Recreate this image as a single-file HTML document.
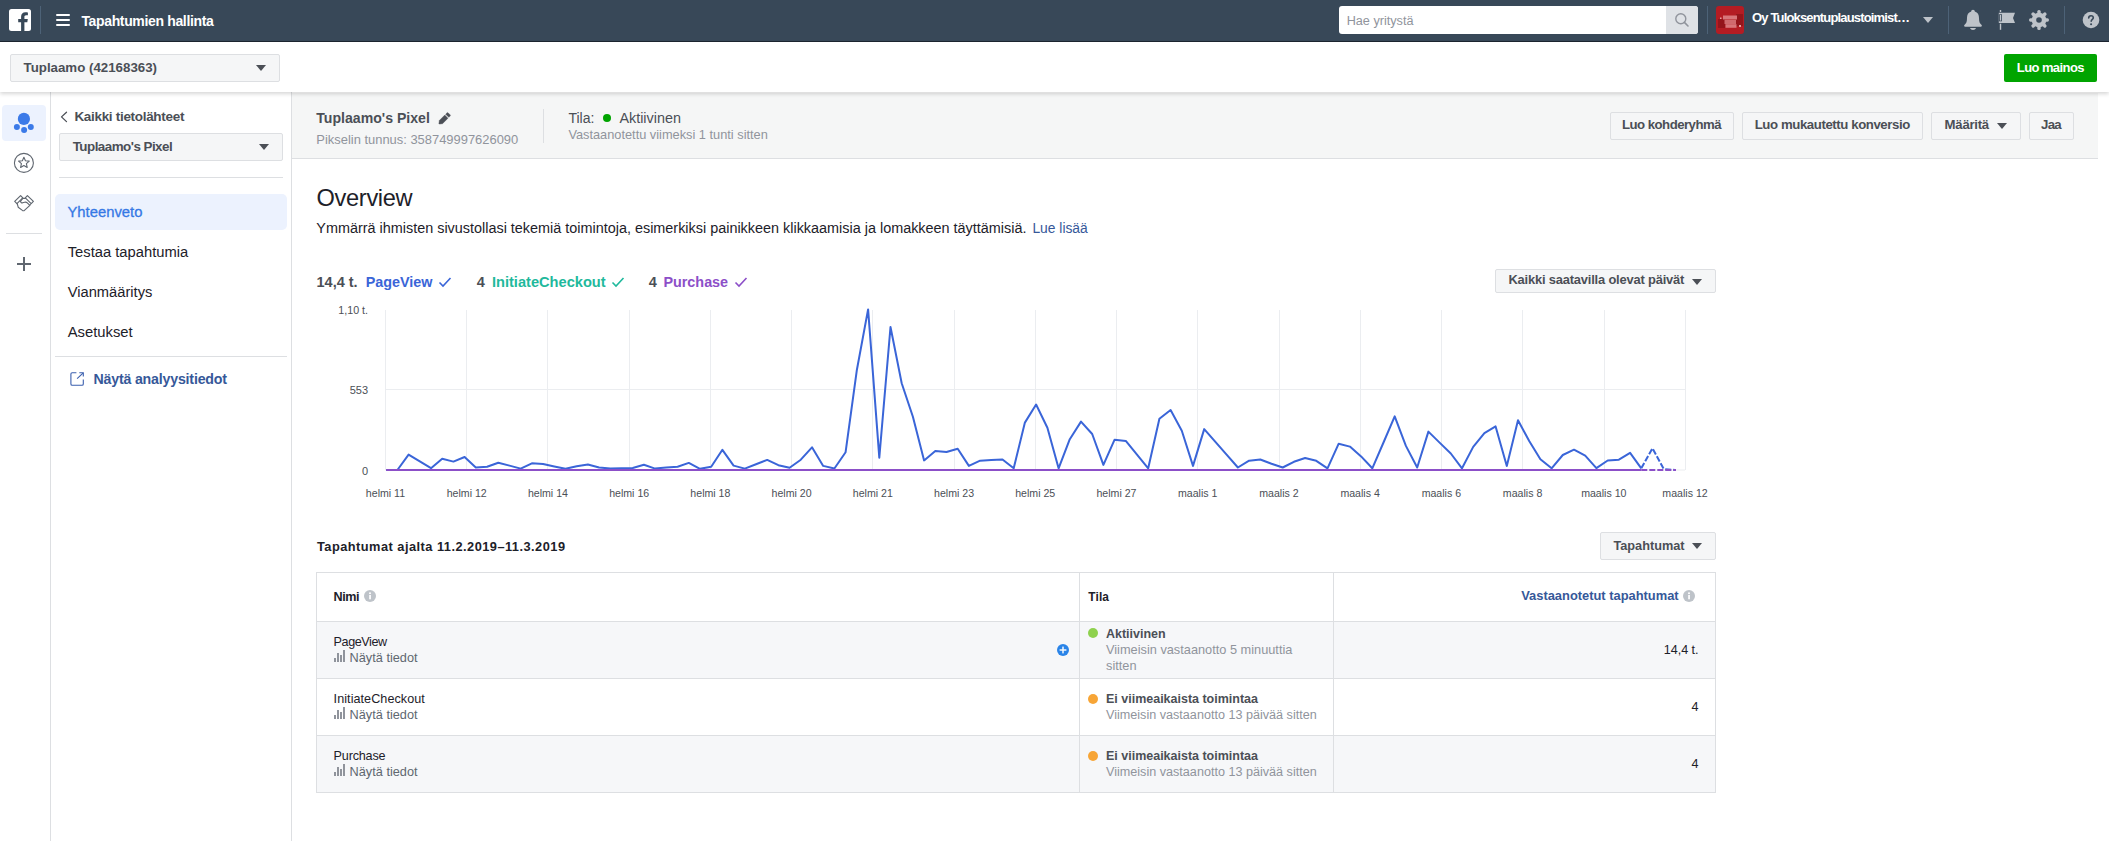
<!DOCTYPE html>
<html><head><meta charset="utf-8"><title>Tapahtumien hallinta</title>
<style>
html,body{margin:0;padding:0}
body{width:2109px;height:841px;overflow:hidden;position:relative;background:#fff;font-family:"Liberation Sans", sans-serif}
.t{position:absolute;white-space:nowrap;font-family:"Liberation Sans", sans-serif}
svg{display:block}
</style></head><body>
<div style="position:absolute;left:0px;top:0px;width:2109px;height:41px;background:#384858"></div>
<div style="position:absolute;left:0px;top:41px;width:2109px;height:1px;background:#1c2530"></div>
<svg style="position:absolute;left:9px;top:9px" width="22" height="22" viewBox="0 0 22 22">
<rect x="0" y="0" width="22" height="22" rx="2.5" fill="#fff"/>
<path d="M12.1 22V13.2H9.2V10.1H12.1V7.7C12.1 4.9 13.8 3.3 16.4 3.3C17.5 3.3 18.6 3.5 18.9 3.5V6.3H17.2C15.8 6.3 15.4 7.1 15.4 8V10.1H18.8L18.3 13.2H15.4V22Z" fill="#384858"/>
</svg>
<div style="position:absolute;left:40px;top:6px;width:1px;height:28px;background:#4d6277"></div>
<div style="position:absolute;left:56px;top:14px;width:14px;height:2px;background:#fff;border-radius:1px"></div>
<div style="position:absolute;left:56px;top:19px;width:14px;height:2px;background:#fff;border-radius:1px"></div>
<div style="position:absolute;left:56px;top:24px;width:14px;height:2px;background:#fff;border-radius:1px"></div>
<div class="t" style="left:81.40px;top:12.05px;font-size:14px;line-height:18px;color:#fff;font-weight:700;letter-spacing:-0.347px;">Tapahtumien hallinta</div>
<div style="position:absolute;left:1339px;top:6px;width:359px;height:28px;background:#fff;border-radius:3px"></div>
<div style="position:absolute;left:1666px;top:6px;width:32px;height:28px;background:#dfe2e6;border-radius:0 3px 3px 0"></div>
<svg style="position:absolute;left:1674px;top:12px" width="16" height="16" viewBox="0 0 16 16">
<circle cx="6.8" cy="6.8" r="5" fill="none" stroke="#90949c" stroke-width="1.4"/>
<path d="M10.4 10.4L14 14" stroke="#90949c" stroke-width="1.6" stroke-linecap="round"/></svg>
<div class="t" style="left:1346.70px;top:12.62px;font-size:12.65px;line-height:16px;color:#90949c;font-weight:400;">Hae yritystä</div>
<div style="position:absolute;left:1707px;top:6px;width:1px;height:28px;background:#4d6277"></div>
<svg style="position:absolute;left:1716px;top:6px" width="28" height="28" viewBox="0 0 28 28">
<rect width="28" height="28" rx="3" fill="#b41c23"/>
<rect x="2" y="13" width="7" height="9" fill="#8c1419" opacity="0.8"/>
<rect x="20" y="8" width="7" height="12" fill="#8c1419" opacity="0.8"/>
<rect x="7" y="9.5" width="14" height="4" fill="#d8767a"/>
<rect x="8.5" y="14" width="11.5" height="4" fill="#d06a6e"/>
<rect x="9.5" y="18.2" width="11" height="3.6" fill="#d8767a"/>
<rect x="4" y="11.5" width="1.5" height="1.5" fill="#e8a0a0"/>
<rect x="23" y="19" width="2" height="2" fill="#e8a0a0"/>
</svg>
<div class="t" style="left:1752.00px;top:10.30px;font-size:13px;line-height:16px;color:#fff;font-weight:700;letter-spacing:-0.836px;">Oy Tuloksentuplaustoimist…</div>
<svg style="position:absolute;left:1923px;top:17px" width="10" height="6" viewBox="0 0 10 6"><path d="M0 0H10L5.0 6Z" fill="#bec3c9"/></svg>
<div style="position:absolute;left:1948px;top:6px;width:1px;height:28px;background:#4d6277"></div>
<svg style="position:absolute;left:1963px;top:9px" width="20" height="22" viewBox="0 0 20 22">
<path d="M10 0.8C11.1 0.8 11.8 1.6 11.8 2.4C14.8 3.2 16 5.6 16 9C16 12.6 16.6 14.2 18.4 15.8C19.2 16.5 19 17.7 17.8 17.7H2.2C1 17.7 0.8 16.5 1.6 15.8C3.4 14.2 4 12.6 4 9C4 5.6 5.2 3.2 8.2 2.4C8.2 1.6 8.9 0.8 10 0.8Z" fill="#bec3c9"/>
<path d="M7 19H13C12.6 20.3 11.4 21 10 21C8.6 21 7.4 20.3 7 19Z" fill="#bec3c9"/></svg>
<svg style="position:absolute;left:1998px;top:10px" width="18" height="20" viewBox="0 0 18 20">
<rect x="1.8" y="0" width="1.4" height="2" fill="#bec3c9"/>
<path d="M0.8 2.8H17L15 8L17 13H0.8Z" fill="#bec3c9"/>
<rect x="1" y="4.3" width="3" height="7" fill="#384858"/>
<rect x="1.8" y="5" width="1.4" height="5.6" fill="#bec3c9"/>
<rect x="1.8" y="13.7" width="1.4" height="6.1" fill="#bec3c9"/>
</svg>
<svg style="position:absolute;left:2029px;top:10px" width="20" height="20" viewBox="0 0 20 20">
<g fill="#bec3c9"><circle cx="10" cy="10" r="7.3"/><rect x="8.3" y="0" width="3.4" height="6" rx="1.6" transform="rotate(0 10 10)"/><rect x="8.3" y="0" width="3.4" height="6" rx="1.6" transform="rotate(45 10 10)"/><rect x="8.3" y="0" width="3.4" height="6" rx="1.6" transform="rotate(90 10 10)"/><rect x="8.3" y="0" width="3.4" height="6" rx="1.6" transform="rotate(135 10 10)"/><rect x="8.3" y="0" width="3.4" height="6" rx="1.6" transform="rotate(180 10 10)"/><rect x="8.3" y="0" width="3.4" height="6" rx="1.6" transform="rotate(225 10 10)"/><rect x="8.3" y="0" width="3.4" height="6" rx="1.6" transform="rotate(270 10 10)"/><rect x="8.3" y="0" width="3.4" height="6" rx="1.6" transform="rotate(315 10 10)"/></g>
<circle cx="10" cy="10" r="2.8" fill="#384858"/></svg>
<div style="position:absolute;left:2064px;top:6px;width:1px;height:28px;background:#4d6277"></div>
<svg style="position:absolute;left:2082px;top:11px" width="18" height="18" viewBox="0 0 18 18">
<circle cx="9" cy="9" r="8.3" fill="#bec3c9"/>
<path d="M6.7 7.0C6.7 5.6 7.7 4.7 9.0 4.7C10.3 4.7 11.3 5.6 11.3 6.8C11.3 8.4 9.2 8.5 9.2 10.3" fill="none" stroke="#384858" stroke-width="1.6" stroke-linecap="round"/>
<circle cx="9.1" cy="13.2" r="1.05" fill="#384858"/></svg>
<div style="position:absolute;left:0px;top:42px;width:2109px;height:50px;background:#fff;box-shadow:0 2px 4px rgba(0,0,0,0.16);z-index:2"></div>
<div style="position:absolute;left:10px;top:54px;width:270px;height:28px;background:#f5f6f7;border:1px solid #dddfe2;border-radius:2px;box-sizing:border-box;z-index:3"></div>
<div class="t" style="left:23.50px;top:58.89px;font-size:13.3px;line-height:17px;color:#4b4f56;font-weight:700;z-index:3">Tuplaamo (42168363)</div>
<div style="position:absolute;z-index:3;left:0;top:0">
<svg style="position:absolute;left:256px;top:65px" width="10" height="6" viewBox="0 0 10 6"><path d="M0 0H10L5.0 6Z" fill="#4b4f56"/></svg>
</div>
<div style="position:absolute;left:2004px;top:54px;width:93px;height:28px;background:#00a400;border-radius:2px;z-index:3"></div>
<div class="t" style="left:2016.80px;top:59.50px;font-size:13px;line-height:16px;color:#fff;font-weight:700;letter-spacing:-0.584px;z-index:3">Luo mainos</div>
<div style="position:absolute;left:50px;top:92px;width:1px;height:749px;background:#dddfe2"></div>
<div style="position:absolute;left:2px;top:105px;width:44px;height:36px;background:#ecf2fe;border-radius:4px"></div>
<svg style="position:absolute;left:12px;top:111px" width="24" height="24" viewBox="0 0 24 24">
<circle cx="11.9" cy="7.9" r="6.1" fill="#3b7ae8"/>
<circle cx="4.9" cy="15.9" r="3.0" fill="#3b7ae8"/>
<circle cx="12.1" cy="19" r="3.0" fill="#3b7ae8"/>
<circle cx="18.8" cy="15.9" r="3.0" fill="#3b7ae8"/></svg>
<svg style="position:absolute;left:12px;top:151px" width="24" height="24" viewBox="0 0 24 24">
<circle cx="11.9" cy="11.9" r="9.5" fill="none" stroke="#606770" stroke-width="1.1"/>
<path d="M11.90 6.30 L13.43 9.80 L17.23 10.17 L14.37 12.70 L15.19 16.43 L11.90 14.50 L8.61 16.43 L9.43 12.70 L6.57 10.17 L10.37 9.80Z" fill="none" stroke="#606770" stroke-width="1.1" stroke-linejoin="round"/></svg>
<svg style="position:absolute;left:10px;top:190px" width="28" height="24" viewBox="0 0 28 24">
<g fill="none" stroke="#606770" stroke-width="1.15" stroke-linejoin="round" stroke-linecap="round">
<path d="M10.6 5.6L12.8 7.9L6.9 13.6L4.7 11.4Z"/>
<path d="M17.4 5.6L23.4 11.4L21.2 13.6L15.3 7.9Z"/>
<path d="M12.8 8.4H15.3"/>
<path d="M12.6 8.6L10.4 11.3C10.9 12.6 11.8 13.2 12.6 12.8L14.6 12.2C15.6 11.9 16.6 12.2 17.3 12.9L19.6 15.2"/>
<path d="M7.2 13.6L8.2 17.2L12.4 20.4C13 20.8 13.8 20.8 14.4 20.4L19.6 15.6L20.4 14.2"/>
</g></svg>
<div style="position:absolute;left:6px;top:233px;width:36px;height:1px;background:#dddfe2"></div>
<div style="position:absolute;left:17px;top:263px;width:14px;height:2px;background:#606770"></div>
<div style="position:absolute;left:23px;top:257px;width:2px;height:14px;background:#606770"></div>
<div style="position:absolute;left:291px;top:92px;width:1px;height:749px;background:#dddfe2"></div>
<svg style="position:absolute;left:59px;top:110px" width="10" height="14" viewBox="0 0 10 14">
<path d="M7.5 2.2L2.5 6.9L7.5 11.6" fill="none" stroke="#4b4f56" stroke-width="1.3" stroke-linecap="round" stroke-linejoin="round"/></svg>
<div class="t" style="left:74.40px;top:108.22px;font-size:13.5px;line-height:17px;color:#4b4f56;font-weight:700;letter-spacing:-0.308px;">Kaikki tietolähteet</div>
<div style="position:absolute;left:59px;top:133px;width:224px;height:28px;background:#f5f6f7;border:1px solid #dddfe2;border-radius:2px;box-sizing:border-box"></div>
<div class="t" style="left:72.70px;top:138.06px;font-size:13.4px;line-height:17px;color:#4b4f56;font-weight:700;letter-spacing:-0.525px;">Tuplaamo's Pixel</div>
<svg style="position:absolute;left:259px;top:144px" width="10" height="6" viewBox="0 0 10 6"><path d="M0 0H10L5.0 6Z" fill="#4b4f56"/></svg>
<div style="position:absolute;left:59px;top:177px;width:224px;height:1px;background:#dddfe2"></div>
<div style="position:absolute;left:55px;top:194px;width:232px;height:36px;background:#ecf2fe;border-radius:5px"></div>
<div class="t" style="left:67.50px;top:203.07px;font-size:14.8px;line-height:18px;color:#3578e5;font-weight:400;-webkit-text-stroke:0.3px #3578e5">Yhteenveto</div>
<div class="t" style="left:67.70px;top:242.89px;font-size:14.75px;line-height:18px;color:#1d2129;font-weight:400;">Testaa tapahtumia</div>
<div class="t" style="left:67.70px;top:283.31px;font-size:14.7px;line-height:18px;color:#1d2129;font-weight:400;">Vianmääritys</div>
<div class="t" style="left:67.70px;top:322.87px;font-size:14.8px;line-height:18px;color:#1d2129;font-weight:400;">Asetukset</div>
<div style="position:absolute;left:55px;top:356px;width:232px;height:1px;background:#dddfe2"></div>
<svg style="position:absolute;left:68px;top:370px" width="18" height="18" viewBox="0 0 18 18">
<g fill="none" stroke="#3b5fae" stroke-width="1.1" stroke-linecap="butt">
<path d="M8.4 2.8H4.2C3.4 2.8 2.9 3.3 2.9 4.1V14C2.9 14.8 3.4 15.3 4.2 15.3H14C14.8 15.3 15.3 14.8 15.3 14V9.5"/>
<path d="M11.3 2.8H15.3V6.6"/><path d="M15 3.1L9.1 8.6"/></g></svg>
<div class="t" style="left:93.50px;top:370.08px;font-size:14.2px;line-height:18px;color:#365899;font-weight:700;letter-spacing:-0.195px;">Näytä analyysitiedot</div>
<div style="position:absolute;left:292px;top:93px;width:1806px;height:65px;background:#f5f6f6"></div>
<div style="position:absolute;left:292px;top:158px;width:1806px;height:1px;background:#dddfe2"></div>
<div class="t" style="left:316.30px;top:108.81px;font-size:14.1px;line-height:18px;color:#4b4f56;font-weight:700;">Tuplaamo's Pixel</div>
<svg style="position:absolute;left:436px;top:108px" width="18" height="18" viewBox="0 0 18 18">
<path d="M3.31 16.11 L2.89 15.69 L3.35 12.47 L8.79 7.03 L11.97 10.21 L6.53 15.65Z" fill="#4b4f56" stroke="#4b4f56" stroke-width="0.4" stroke-linejoin="round"/>
<path d="M9.64 6.18 L11.13 4.69 L11.97 4.69 L14.31 7.03 L14.31 7.87 L12.82 9.36Z" fill="#4b4f56" stroke="#4b4f56" stroke-width="0.4" stroke-linejoin="round"/></svg>
<div class="t" style="left:316.30px;top:131.52px;font-size:12.93px;line-height:16px;color:#90949c;font-weight:400;">Pikselin tunnus: 358749997626090</div>
<div style="position:absolute;left:543px;top:109px;width:1px;height:34px;background:#dddfe2"></div>
<div class="t" style="left:568.40px;top:108.84px;font-size:14.04px;line-height:18px;color:#4b4f56;font-weight:400;">Tila:</div>
<div style="position:absolute;left:603px;top:114px;width:8.4px;height:8.4px;border-radius:50%;background:#00a400"></div>
<div class="t" style="left:619.40px;top:108.71px;font-size:14.39px;line-height:18px;color:#4b4f56;font-weight:400;">Aktiivinen</div>
<div class="t" style="left:568.40px;top:127.27px;font-size:12.79px;line-height:16px;color:#90949c;font-weight:400;">Vastaanotettu viimeksi 1 tunti sitten</div>
<div style="position:absolute;left:1610px;top:112px;width:124px;height:28px;background:#f5f6f7;border:1px solid #dddfe2;border-radius:2px;box-sizing:border-box"></div>
<div class="t" style="left:1622.00px;top:117.33px;font-size:13.2px;line-height:16px;color:#4b4f56;font-weight:700;letter-spacing:-0.519px;">Luo kohderyhmä</div>
<div style="position:absolute;left:1742px;top:112px;width:181px;height:28px;background:#f5f6f7;border:1px solid #dddfe2;border-radius:2px;box-sizing:border-box"></div>
<div class="t" style="left:1754.70px;top:117.33px;font-size:13.2px;line-height:16px;color:#4b4f56;font-weight:700;letter-spacing:-0.403px;">Luo mukautettu konversio</div>
<div style="position:absolute;left:1931px;top:112px;width:90px;height:28px;background:#f5f6f7;border:1px solid #dddfe2;border-radius:2px;box-sizing:border-box"></div>
<div class="t" style="left:1944.60px;top:117.33px;font-size:13.2px;line-height:16px;color:#4b4f56;font-weight:700;letter-spacing:-0.265px;">Määritä</div>
<svg style="position:absolute;left:1997px;top:123px" width="10" height="6" viewBox="0 0 10 6"><path d="M0 0H10L5.0 6Z" fill="#4b4f56"/></svg>
<div style="position:absolute;left:2029px;top:112px;width:45px;height:28px;background:#f5f6f7;border:1px solid #dddfe2;border-radius:2px;box-sizing:border-box"></div>
<div class="t" style="left:2041.00px;top:117.33px;font-size:13.2px;line-height:16px;color:#4b4f56;font-weight:700;letter-spacing:-0.658px;">Jaa</div>
<div class="t" style="left:316.60px;top:182.62px;font-size:23.6px;line-height:30px;color:#1d2129;font-weight:400;letter-spacing:-0.333px;">Overview</div>
<div class="t" style="left:316.30px;top:218.80px;font-size:14.42px;line-height:18px;color:#1d2129;font-weight:400;">Ymmärrä ihmisten sivustollasi tekemiä toimintoja, esimerkiksi painikkeen klikkaamisia ja lomakkeen täyttämisiä.</div>
<div class="t" style="left:1032.40px;top:219.50px;font-size:13.84px;line-height:17px;color:#365899;font-weight:400;">Lue lisää</div>
<div class="t" style="left:316.50px;top:272.98px;font-size:14.5px;line-height:18px;color:#4b4f56;font-weight:700;">14,4 t.</div>
<div class="t" style="left:365.70px;top:273.02px;font-size:14.36px;line-height:18px;color:#3a65d8;font-weight:700;">PageView</div>
<svg style="position:absolute;left:438px;top:276px" width="14" height="12" viewBox="0 0 14 12"><path d="M1.5 6.5L5 10L12.5 2" fill="none" stroke="#3a65d8" stroke-width="1.6"/></svg>
<div class="t" style="left:476.70px;top:272.98px;font-size:14.5px;line-height:18px;color:#4b4f56;font-weight:700;">4</div>
<div class="t" style="left:491.90px;top:272.93px;font-size:14.64px;line-height:18px;color:#1fb99c;font-weight:700;">InitiateCheckout</div>
<svg style="position:absolute;left:611px;top:276px" width="14" height="12" viewBox="0 0 14 12"><path d="M1.5 6.5L5 10L12.5 2" fill="none" stroke="#1fb99c" stroke-width="1.6"/></svg>
<div class="t" style="left:648.80px;top:272.98px;font-size:14.5px;line-height:18px;color:#4b4f56;font-weight:700;">4</div>
<div class="t" style="left:663.40px;top:273.01px;font-size:14.39px;line-height:18px;color:#8c4fc8;font-weight:700;">Purchase</div>
<svg style="position:absolute;left:733.5px;top:276px" width="14" height="12" viewBox="0 0 14 12"><path d="M1.5 6.5L5 10L12.5 2" fill="none" stroke="#8c4fc8" stroke-width="1.6"/></svg>
<div style="position:absolute;left:1495px;top:269px;width:221px;height:24px;background:#f5f6f7;border:1px solid #dddfe2;border-radius:2px;box-sizing:border-box"></div>
<div class="t" style="left:1508.40px;top:272.43px;font-size:12.9px;line-height:16px;color:#4b4f56;font-weight:700;letter-spacing:-0.177px;">Kaikki saatavilla olevat päivät</div>
<svg style="position:absolute;left:1692px;top:278.5px" width="10" height="6" viewBox="0 0 10 6"><path d="M0 0H10L5.0 6Z" fill="#4b4f56"/></svg>
<svg style="position:absolute;left:0;top:0" width="2109" height="841" viewBox="0 0 2109 841">
<line x1="385.50" y1="310" x2="385.50" y2="470" stroke="#ebedf0" stroke-width="1"/>
<line x1="466.50" y1="310" x2="466.50" y2="470" stroke="#ebedf0" stroke-width="1"/>
<line x1="547.50" y1="310" x2="547.50" y2="470" stroke="#ebedf0" stroke-width="1"/>
<line x1="629.50" y1="310" x2="629.50" y2="470" stroke="#ebedf0" stroke-width="1"/>
<line x1="710.50" y1="310" x2="710.50" y2="470" stroke="#ebedf0" stroke-width="1"/>
<line x1="791.50" y1="310" x2="791.50" y2="470" stroke="#ebedf0" stroke-width="1"/>
<line x1="872.50" y1="310" x2="872.50" y2="470" stroke="#ebedf0" stroke-width="1"/>
<line x1="954.50" y1="310" x2="954.50" y2="470" stroke="#ebedf0" stroke-width="1"/>
<line x1="1035.50" y1="310" x2="1035.50" y2="470" stroke="#ebedf0" stroke-width="1"/>
<line x1="1116.50" y1="310" x2="1116.50" y2="470" stroke="#ebedf0" stroke-width="1"/>
<line x1="1197.50" y1="310" x2="1197.50" y2="470" stroke="#ebedf0" stroke-width="1"/>
<line x1="1279.50" y1="310" x2="1279.50" y2="470" stroke="#ebedf0" stroke-width="1"/>
<line x1="1360.50" y1="310" x2="1360.50" y2="470" stroke="#ebedf0" stroke-width="1"/>
<line x1="1441.50" y1="310" x2="1441.50" y2="470" stroke="#ebedf0" stroke-width="1"/>
<line x1="1522.50" y1="310" x2="1522.50" y2="470" stroke="#ebedf0" stroke-width="1"/>
<line x1="1604.50" y1="310" x2="1604.50" y2="470" stroke="#ebedf0" stroke-width="1"/>
<line x1="1685.50" y1="310" x2="1685.50" y2="470" stroke="#ebedf0" stroke-width="1"/>
<line x1="385.5" y1="389.5" x2="1685" y2="389.5" stroke="#ebedf0" stroke-width="1"/>
<line x1="385.5" y1="470" x2="1685" y2="470" stroke="#ebedf0" stroke-width="1"/>
<polyline points="386.2,470.0 397.4,470.0 408.6,454.6 419.8,461.4 431.0,468.2 442.2,458.8 453.4,461.6 464.6,457.0 475.8,467.4 487.1,466.8 498.3,462.7 509.5,465.6 520.7,468.6 531.9,463.3 543.1,464.0 554.3,466.5 565.5,468.8 576.7,466.3 587.9,464.5 599.1,467.5 610.3,468.5 621.5,468.3 632.7,468.0 643.9,464.8 655.1,468.6 666.3,467.6 677.6,466.8 688.8,462.9 700.0,468.8 711.2,466.8 722.4,449.8 733.6,465.6 744.8,468.6 756.0,464.2 767.2,459.9 778.4,465.2 789.6,467.8 800.8,459.7 812.0,447.3 823.2,465.9 834.4,468.5 845.6,452.2 856.9,369.7 868.1,309.4 879.3,457.7 890.5,327.0 901.7,383.3 912.9,416.7 924.1,460.4 935.3,451.0 946.5,452.0 957.7,448.7 968.9,465.9 980.1,460.7 991.3,460.0 1002.5,459.5 1013.7,468.3 1024.9,422.6 1036.1,404.5 1047.4,427.8 1058.6,468.3 1069.8,439.2 1081.0,421.6 1092.2,434.0 1103.4,464.9 1114.6,439.7 1125.8,440.9 1137.0,454.6 1148.2,468.3 1159.4,418.8 1170.6,410.0 1181.8,430.7 1193.0,465.9 1204.2,429.1 1215.4,441.9 1226.6,454.7 1237.9,467.5 1249.1,460.7 1260.3,459.5 1271.5,463.7 1282.7,467.5 1293.9,461.8 1305.1,458.0 1316.3,460.8 1327.5,468.3 1338.7,443.7 1349.9,446.6 1361.1,456.4 1372.3,468.3 1383.5,442.5 1394.7,416.4 1405.9,445.9 1417.2,467.5 1428.4,431.6 1439.6,442.6 1450.8,453.5 1462.0,468.3 1473.2,446.9 1484.4,433.1 1495.6,426.4 1506.8,465.9 1518.0,420.2 1529.2,441.0 1540.4,459.2 1551.6,468.3 1562.8,455.0 1574.0,449.7 1585.2,455.7 1596.4,468.1 1607.7,460.5 1618.9,459.7 1630.1,452.8 1641.3,468.3" fill="none" stroke="#3a65d8" stroke-width="2" stroke-linejoin="round"/>
<polyline points="1641.3,468.3 1652.5,448.3 1663.7,469.0 1674.9,470.0" fill="none" stroke="#3a65d8" stroke-width="2" stroke-dasharray="6 2"/>
<line x1="386.2" y1="470" x2="1641.3" y2="470" stroke="#8c4fc8" stroke-width="2"/>
<line x1="1641.3" y1="470" x2="1676" y2="470" stroke="#8c4fc8" stroke-width="2" stroke-dasharray="6 2"/>
</svg>
<div class="t" style="right:1741.00px;top:304.29px;font-size:10.7px;line-height:13px;color:#4b4f56;font-weight:400;">1,10 t.</div>
<div class="t" style="right:1741.00px;top:383.19px;font-size:11px;line-height:14px;color:#4b4f56;font-weight:400;">553</div>
<div class="t" style="right:1741.00px;top:463.69px;font-size:11px;line-height:14px;color:#4b4f56;font-weight:400;">0</div>
<div class="t" style="left:325.50px;width:120px;text-align:center;top:486.33px;font-size:10.6px;line-height:14px;color:#4b4f56">helmi 11</div>
<div class="t" style="left:406.72px;width:120px;text-align:center;top:486.33px;font-size:10.6px;line-height:14px;color:#4b4f56">helmi 12</div>
<div class="t" style="left:487.94px;width:120px;text-align:center;top:486.33px;font-size:10.6px;line-height:14px;color:#4b4f56">helmi 14</div>
<div class="t" style="left:569.16px;width:120px;text-align:center;top:486.33px;font-size:10.6px;line-height:14px;color:#4b4f56">helmi 16</div>
<div class="t" style="left:650.38px;width:120px;text-align:center;top:486.33px;font-size:10.6px;line-height:14px;color:#4b4f56">helmi 18</div>
<div class="t" style="left:731.60px;width:120px;text-align:center;top:486.33px;font-size:10.6px;line-height:14px;color:#4b4f56">helmi 20</div>
<div class="t" style="left:812.82px;width:120px;text-align:center;top:486.33px;font-size:10.6px;line-height:14px;color:#4b4f56">helmi 21</div>
<div class="t" style="left:894.04px;width:120px;text-align:center;top:486.33px;font-size:10.6px;line-height:14px;color:#4b4f56">helmi 23</div>
<div class="t" style="left:975.26px;width:120px;text-align:center;top:486.33px;font-size:10.6px;line-height:14px;color:#4b4f56">helmi 25</div>
<div class="t" style="left:1056.48px;width:120px;text-align:center;top:486.33px;font-size:10.6px;line-height:14px;color:#4b4f56">helmi 27</div>
<div class="t" style="left:1137.70px;width:120px;text-align:center;top:486.33px;font-size:10.6px;line-height:14px;color:#4b4f56">maalis 1</div>
<div class="t" style="left:1218.92px;width:120px;text-align:center;top:486.33px;font-size:10.6px;line-height:14px;color:#4b4f56">maalis 2</div>
<div class="t" style="left:1300.14px;width:120px;text-align:center;top:486.33px;font-size:10.6px;line-height:14px;color:#4b4f56">maalis 4</div>
<div class="t" style="left:1381.36px;width:120px;text-align:center;top:486.33px;font-size:10.6px;line-height:14px;color:#4b4f56">maalis 6</div>
<div class="t" style="left:1462.58px;width:120px;text-align:center;top:486.33px;font-size:10.6px;line-height:14px;color:#4b4f56">maalis 8</div>
<div class="t" style="left:1543.80px;width:120px;text-align:center;top:486.33px;font-size:10.6px;line-height:14px;color:#4b4f56">maalis 10</div>
<div class="t" style="left:1625.02px;width:120px;text-align:center;top:486.33px;font-size:10.6px;line-height:14px;color:#4b4f56">maalis 12</div>
<div class="t" style="left:317.00px;top:538.56px;font-size:12.8px;line-height:16px;color:#1d2129;font-weight:700;letter-spacing:0.473px;">Tapahtumat ajalta 11.2.2019–11.3.2019</div>
<div style="position:absolute;left:1600px;top:532px;width:116px;height:28px;background:#f5f6f7;border:1px solid #dddfe2;border-radius:2px;box-sizing:border-box"></div>
<div class="t" style="left:1613.40px;top:537.59px;font-size:12.73px;line-height:16px;color:#4b4f56;font-weight:700;">Tapahtumat</div>
<svg style="position:absolute;left:1692px;top:543px" width="10" height="6" viewBox="0 0 10 6"><path d="M0 0H10L5.0 6Z" fill="#4b4f56"/></svg>
<div style="position:absolute;left:316px;top:572px;width:1400px;height:221px;border:1px solid #dddfe2;box-sizing:border-box;background:#fff"></div>
<div style="position:absolute;left:317px;top:622px;width:1398px;height:56px;background:#f6f7f9"></div>
<div style="position:absolute;left:317px;top:736px;width:1398px;height:56px;background:#f6f7f9"></div>
<div style="position:absolute;left:317px;top:621px;width:1398px;height:1px;background:#dddfe2"></div>
<div style="position:absolute;left:317px;top:678px;width:1398px;height:1px;background:#dddfe2"></div>
<div style="position:absolute;left:317px;top:735px;width:1398px;height:1px;background:#dddfe2"></div>
<div style="position:absolute;left:1079px;top:573px;width:1px;height:219px;background:#dddfe2"></div>
<div style="position:absolute;left:1333px;top:573px;width:1px;height:219px;background:#dddfe2"></div>
<div class="t" style="left:333.60px;top:588.63px;font-size:12.6px;line-height:16px;color:#1d2129;font-weight:700;letter-spacing:-0.432px;">Nimi</div>
<svg style="position:absolute;left:364px;top:590.4px" width="12" height="12" viewBox="0 0 12 12"><circle cx="6" cy="6" r="6" fill="#bec3c9"/><rect x="5.2" y="5" width="1.7" height="4.3" fill="#fff"/><circle cx="6" cy="3.3" r="1" fill="#fff"/></svg>
<div class="t" style="left:1088.30px;top:590.08px;font-size:11.9px;line-height:15px;color:#1d2129;font-weight:700;letter-spacing:0.140px;">Tila</div>
<div class="t" style="right:430.40px;top:588.23px;font-size:12.89px;line-height:16px;color:#365899;font-weight:700;">Vastaanotetut tapahtumat</div>
<svg style="position:absolute;left:1683.3px;top:590.1px" width="12" height="12" viewBox="0 0 12 12"><circle cx="6" cy="6" r="6" fill="#bec3c9"/><rect x="5.2" y="5" width="1.7" height="4.3" fill="#fff"/><circle cx="6" cy="3.3" r="1" fill="#fff"/></svg>
<div class="t" style="left:333.60px;top:633.63px;font-size:12.6px;line-height:16px;color:#1d2129;font-weight:400;letter-spacing:-0.426px;">PageView</div>
<svg style="position:absolute;left:334px;top:650px" width="12" height="12" viewBox="0 0 12 12"><rect x="0" y="8" width="2" height="4" fill="#90949c"/><rect x="3" y="3" width="2" height="9" fill="#90949c"/><rect x="6" y="5" width="2" height="7" fill="#90949c"/><rect x="9" y="0" width="2" height="12" fill="#90949c"/></svg>
<div class="t" style="left:349.60px;top:650.19px;font-size:12.74px;line-height:16px;color:#606770;font-weight:400;">Näytä tiedot</div>
<div class="t" style="left:333.60px;top:690.63px;font-size:12.6px;line-height:16px;color:#1d2129;font-weight:400;letter-spacing:0.059px;">InitiateCheckout</div>
<svg style="position:absolute;left:334px;top:707px" width="12" height="12" viewBox="0 0 12 12"><rect x="0" y="8" width="2" height="4" fill="#90949c"/><rect x="3" y="3" width="2" height="9" fill="#90949c"/><rect x="6" y="5" width="2" height="7" fill="#90949c"/><rect x="9" y="0" width="2" height="12" fill="#90949c"/></svg>
<div class="t" style="left:349.60px;top:707.19px;font-size:12.74px;line-height:16px;color:#606770;font-weight:400;">Näytä tiedot</div>
<div class="t" style="left:333.60px;top:747.63px;font-size:12.6px;line-height:16px;color:#1d2129;font-weight:400;letter-spacing:-0.174px;">Purchase</div>
<svg style="position:absolute;left:334px;top:764px" width="12" height="12" viewBox="0 0 12 12"><rect x="0" y="8" width="2" height="4" fill="#90949c"/><rect x="3" y="3" width="2" height="9" fill="#90949c"/><rect x="6" y="5" width="2" height="7" fill="#90949c"/><rect x="9" y="0" width="2" height="12" fill="#90949c"/></svg>
<div class="t" style="left:349.60px;top:764.19px;font-size:12.74px;line-height:16px;color:#606770;font-weight:400;">Näytä tiedot</div>
<svg style="position:absolute;left:1057px;top:644px" width="12" height="12" viewBox="0 0 12 12"><circle cx="6" cy="6" r="6" fill="#2a84e8"/><rect x="2.6" y="5.25" width="6.8" height="1.5" fill="#f4f7fb"/><rect x="5.25" y="2.6" width="1.5" height="6.8" fill="#f4f7fb"/></svg>
<div style="position:absolute;left:1088px;top:628px;width:10px;height:10px;border-radius:50%;background:#8ed14e"></div>
<div class="t" style="left:1106.00px;top:625.57px;font-size:12.49px;line-height:16px;color:#4b4f56;font-weight:700;">Aktiivinen</div>
<div class="t" style="left:1106.00px;top:641.78px;font-size:12.77px;line-height:16px;color:#90949c;font-weight:400;">Viimeisin vastaanotto 5 minuuttia</div>
<div class="t" style="left:1106.00px;top:657.58px;font-size:12.77px;line-height:16px;color:#90949c;font-weight:400;">sitten</div>
<div style="position:absolute;left:1088px;top:693.7px;width:10px;height:10px;border-radius:50%;background:#f7a536"></div>
<div class="t" style="left:1106.00px;top:690.87px;font-size:12.49px;line-height:16px;color:#4b4f56;font-weight:700;">Ei viimeaikaista toimintaa</div>
<div class="t" style="left:1106.00px;top:706.63px;font-size:12.62px;line-height:16px;color:#90949c;font-weight:400;">Viimeisin vastaanotto 13 päivää sitten</div>
<div style="position:absolute;left:1088px;top:750.7px;width:10px;height:10px;border-radius:50%;background:#f7a536"></div>
<div class="t" style="left:1106.00px;top:747.87px;font-size:12.49px;line-height:16px;color:#4b4f56;font-weight:700;">Ei viimeaikaista toimintaa</div>
<div class="t" style="left:1106.00px;top:763.63px;font-size:12.62px;line-height:16px;color:#90949c;font-weight:400;">Viimeisin vastaanotto 13 päivää sitten</div>
<div class="t" style="right:410.40px;top:641.64px;font-size:12.59px;line-height:16px;color:#1d2129;font-weight:400;">14,4 t.</div>
<div class="t" style="right:410.40px;top:698.64px;font-size:12.59px;line-height:16px;color:#1d2129;font-weight:400;">4</div>
<div class="t" style="right:410.40px;top:755.64px;font-size:12.59px;line-height:16px;color:#1d2129;font-weight:400;">4</div>
</body></html>
